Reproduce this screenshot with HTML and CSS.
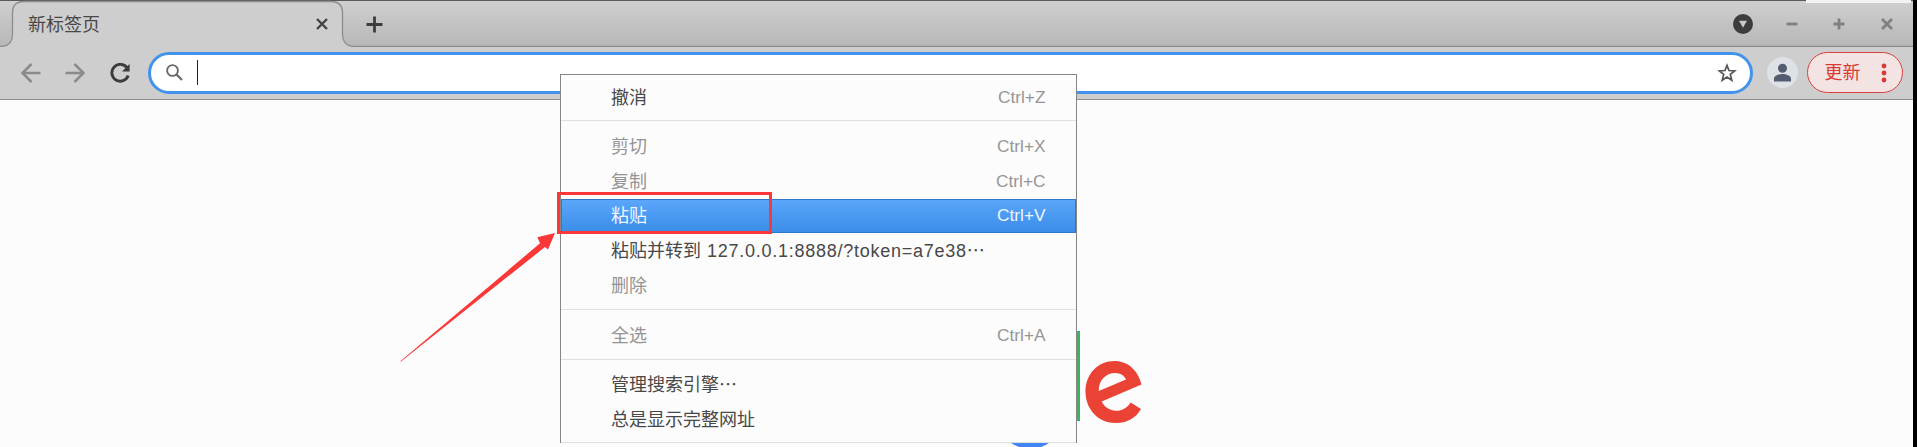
FILE: index.html
```html
<!DOCTYPE html>
<html lang="zh-CN">
<head>
<meta charset="utf-8">
<title>新标签页</title>
<link rel="stylesheet" href="styles.css">
</head>
<body>
<div class="window">
  <header class="tabstrip">
    <svg class="tab-shape" width="1913" height="47" viewBox="0 0 1913 47">
      <path class="tab-fill" d="M0 47V46.500Q12.500 46.500 12.500 34V13Q12.500 1.500 24 1.500H331Q342.500 1.500 342.500 13V34Q342.500 46.500 355 46.500V47Z"/>
      <path class="tab-line" d="M0 46.500Q12.500 46.500 12.500 34V13Q12.500 1.500 24 1.500H331Q342.500 1.500 342.500 13V34Q342.500 46.500 355 46.500H1913"/>
    </svg>
    <div class="tab">
      <span class="tab-title">新标签页</span>
      <svg class="tab-close" width="12" height="12" viewBox="0 0 12 12"><path d="M1 1L11 11M11 1L1 11"/></svg>
    </div>
    <svg class="new-tab" width="17" height="17" viewBox="0 0 17 17"><path d="M8.500 .500V16.500M.500 8.500H16.500"/></svg>
    <div class="window-controls">
      <svg width="20" height="20" viewBox="0 0 20 20"><circle cx="10" cy="10" r="10" fill="#3c3c3c"/><path d="M6 6.800H14L10 13.700Z" fill="#c8c8c8"/></svg>
      <svg class="ctl" width="12" height="12" viewBox="0 0 12 12"><path d="M.500 6H11.500"/></svg>
      <svg class="ctl" width="12" height="12" viewBox="0 0 12 12"><path d="M.500 6H11.500M6 .500V11.500"/></svg>
      <svg class="ctl" width="12" height="12" viewBox="0 0 12 12"><path d="M1 1L11 11M11 1L1 11"/></svg>
    </div>
  </header>
  <nav class="toolbar">
    <svg class="nav-icon dim" width="20" height="20" viewBox="0 0 20 20"><path d="M19.500 10H2M10.500 1L1.500 10L10.500 19"/></svg>
    <svg class="nav-icon dim" width="20" height="20" viewBox="0 0 20 20"><path d="M.500 10H18M9.500 1L18.500 10L9.500 19"/></svg>
    <svg class="reload" width="20" height="20" viewBox="0 0 20 20"><path d="M17.200 5A8.400 8.400 0 1 0 18.200 12.500" fill="none" stroke="#3c3c3c" stroke-width="2.900"/><path d="M19.600 1V8.600H12Z" fill="#3c3c3c"/></svg>
    <div class="omnibox">
      <svg width="17" height="17" viewBox="0 0 17 17" fill="none" stroke="#6a6a6a"><circle cx="6.500" cy="6.500" r="5.400" stroke-width="1.900"/><path d="M10.400 10.400L16 16" stroke-width="2.200"/></svg>
      <span class="caret"></span>
      <svg class="star" width="20" height="20" viewBox="0 0 20 20"><path d="M10 2.400L12 7.500L17.700 7.900L13.300 11.400L14.800 17.300L10 14.100L5.200 17.300L6.700 11.400L2.300 7.900L8 7.500Z" fill="none" stroke="#555" stroke-width="1.700"/></svg>
    </div>
    <svg class="avatar" width="31" height="31" viewBox="0 0 31 31"><circle cx="15.500" cy="15.500" r="15.500" fill="#dee1e6"/><circle cx="15.500" cy="11.300" r="4.500" fill="#545d70"/><path d="M7 24.500V21.500C7 18.500 12 17 15.500 17S24 18.500 24 21.500V24.500Z" fill="#545d70"/></svg>
    <div class="update">
      <span>更新</span>
      <svg width="6" height="20" viewBox="0 0 6 20" fill="#d93a36"><circle cx="3" cy="3" r="2.400"/><circle cx="3" cy="10" r="2.400"/><circle cx="3" cy="17" r="2.400"/></svg>
    </div>
  </nav>
  <main class="page">
    <svg class="logo" width="170" height="120" viewBox="0 0 170 120">
      <rect x="70" y="4" width="10" height="90" fill="#3cb55c"/>
      <path fill="#ea4335" fill-rule="evenodd" d="M141.500 57.500C138 43 127.500 34 114.500 34C98 34 85.500 47 85.500 64.500C85.500 83 99 96 115.500 96C127 96 135.500 91.500 141 82L130.700 75.400C127.500 80.500 122.500 83.700 116 83.700C110 83.700 104.500 80.500 101.700 74.500ZM98.800 64C98.300 53.500 106 46 115 46C120.500 46 124.500 48.800 126 52.600Z"/>
      <path d="M11 116H49Q40 122 30.500 122T11 116Z" fill="#4285f4"/>
    </svg>
  </main>
</div>
<span class="corner"></span>

<div class="menu">
  <div class="item"><span>撤消</span><kbd>Ctrl+Z</kbd></div>
  <hr class="first">
  <div class="item off"><span>剪切</span><kbd>Ctrl+X</kbd></div>
  <div class="item off"><span>复制</span><kbd>Ctrl+C</kbd></div>
  <div class="item selected"><span>粘贴</span><kbd>Ctrl+V</kbd></div>
  <div class="item"><span>粘贴并转到 <span class="url">127.0.0.1:8888/?token=a7e38</span>⋯</span></div>
  <div class="item off"><span>删除</span></div>
  <hr>
  <div class="item off"><span>全选</span><kbd>Ctrl+A</kbd></div>
  <hr class="third">
  <div class="item"><span>管理搜索引擎⋯</span></div>
  <div class="item"><span>总是显示完整网址</span></div>
  <hr class="last">
</div>
<div class="highlight-box"></div>
<svg class="arrow" width="160" height="132" viewBox="0 0 160 132"><path d="M0 131.500L140 13.300L137.300 7.300L155 3L148 19.500L145 17L1 131.500Z"/></svg>
</body>
</html>
```
FILE: styles.css
```css
* { box-sizing: border-box; }

body {
  margin: 0;
  width: 1917px;
  height: 447px;
  overflow: hidden;
  position: relative;
  background: #000;
  font: 18px/1 "Liberation Sans", "Noto Sans CJK SC", sans-serif;
  color: #484848;
}

svg { display: block; flex: none; }

.window {
  width: 1913px;
  height: 447px;
  display: flex;
  flex-direction: column;
  background: #fcfcfc;
}

.tabstrip {
  position: relative;
  height: 47px;
  flex: none;
  display: flex;
  align-items: center;
  background: linear-gradient(#cfcfcf, #b7b7b7);
  border-top: 1px solid #5c5759;
}

.tab-shape { position: absolute; left: 0; top: -1px; }
.tab-fill { fill: #cecece; }
.tab-line { fill: none; stroke: #8c8c8c; stroke-width: 1.3; }

.tab {
  position: relative;
  width: 343px;
  padding: 0 15.5px 0 28px;
  display: flex;
  align-items: center;
  justify-content: space-between;
}

.tab-title { font-size: 18px; line-height: 24px; padding-top: 1px; }
.tab-close { fill: none; stroke: #444; stroke-width: 2.4; }
.new-tab { margin-left: 22.5px; fill: none; stroke: #3c3c3c; stroke-width: 2.8; }

.window-controls {
  margin-left: auto;
  padding-right: 20px;
  display: flex;
  align-items: center;
  gap: 35px;
}
.window-controls svg:first-child { margin-right: -2px; }
.ctl { fill: none; stroke: #808080; stroke-width: 2.8; }
.window-controls .ctl:last-child { margin-left: 1px; }

.toolbar {
  height: 53px;
  flex: none;
  display: flex;
  align-items: center;
  padding: 0 10px 1px 20.5px;
  background: #cecece;
  border-bottom: 1px solid #8e8e8e;
}
.nav-icon { margin-right: 24.5px; fill: none; stroke: #8b8b8b; stroke-width: 2.5; }

.omnibox {
  margin-left: 18.5px;
  width: 1605px;
  height: 42px;
  padding: 0 13px 0 15px;
  display: flex;
  align-items: center;
  border: 3px solid #4193ec;
  border-radius: 21px;
  background: #fff;
}
.caret { width: 1px; height: 25px; margin-left: 14px; background: #222; }
.star { margin-left: auto; }
.avatar { margin-left: 14px; }

.update {
  margin-left: 9.5px;
  width: 96px;
  height: 41px;
  padding: 0 15.5px 0 16.5px;
  display: flex;
  align-items: center;
  justify-content: space-between;
  border: 1.5px solid #d9403d;
  border-radius: 21px;
  background: #f3e4e3;
  color: #d93a36;
}

.page { flex: 1; position: relative; overflow: hidden; }
.logo { position: absolute; left: 1000px; top: 227px; }

.corner {
  position: absolute;
  left: 1806px;
  top: 0;
  width: 105px;
  height: 3px;
  background: #f3f3f3;
}

.menu {
  position: absolute;
  left: 560px;
  top: 74px;
  width: 517px;
  height: 369px;
  padding-top: 5px;
  background: #fcfcfc;
  border: 1px solid #868686;
  border-bottom: 0;
}
.item {
  height: 35px;
  padding: 0 30.5px 0 50px;
  display: flex;
  align-items: center;
  justify-content: space-between;
  white-space: pre;
}
.item kbd {
  font: 17.3px/1 "Liberation Sans", sans-serif;
  color: #969696;
}
.off { color: #949494; }
.item.selected {
  height: 34px;
  color: #eef6ff;
  background: linear-gradient(#5aa6fa, #3b8de8);
  border: 1px solid #3278c8;
  padding: 0 29.5px 0 49px;
}
.selected kbd { color: #eef6ff; }
.url { margin-left: 1px; letter-spacing: .74px; }

.menu hr {
  height: 1px;
  margin: 6px 0 8px;
  border: 0;
  background: #e0e0e0;
}
.menu hr.first { margin-top: 5px; }
.menu hr.third { margin-bottom: 7px; }
.menu hr.last { margin: 5px 0 0; }

.highlight-box {
  position: absolute;
  left: 557px;
  top: 192px;
  width: 215px;
  height: 42px;
  border: 3px solid #fb3838;
}
.arrow { position: absolute; left: 399.5px; top: 230px; fill: #fb3838; }
```
